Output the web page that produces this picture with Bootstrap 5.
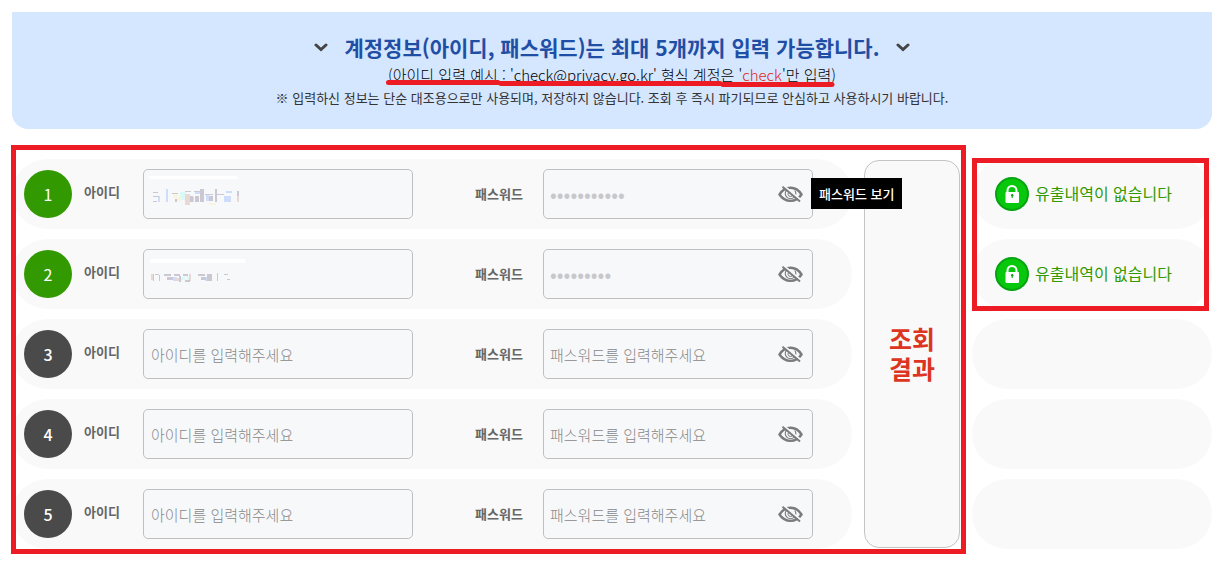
<!DOCTYPE html>
<html lang="ko">
<head>
<meta charset="utf-8">
<meta name="viewport" content="width=device-width, initial-scale=1">
<title>계정정보 유출 조회</title>
<link href="https://cdn.jsdelivr.net/npm/bootstrap@5.3.0/dist/css/bootstrap.min.css" rel="stylesheet">
<style>
body{font-family:"Noto Sans CJK KR",sans-serif;color:#333;background:#fff;padding:12px 9px 12px 12px}
.guide{background:#d5e6ff;border-radius:0 0 16px 16px;padding:19px 12px 21px}
.guide h1{font-size:21px;line-height:32px;font-weight:700;color:#1f4fa5;margin:0}
.guide p{margin:0}
.example{font-size:15px;line-height:24px;font-weight:300;color:#000}
.example em{font-style:normal;color:#e01f10}
.notice{font-size:13px;line-height:21px}
.marker{position:absolute;left:50%;top:17px;transform:translateX(-50%)}
.board{margin-top:30px;gap:12px}
.board-form{gap:12px}
.entry{background:#f9f9f9;border-radius:35px;height:70px;padding:0 39px 0 12px}
.num{width:48px;height:48px;border-radius:50%;background:#4a4a4a;color:#fff;font-size:16px;font-weight:500}
.num.on{background:#339900;font-weight:400}
.lbl{font-size:13px;font-weight:700;color:#666;line-height:20px}
.lbl-id{width:71px;padding:0 0 4px 12px}
.lbl-pw{width:130px;padding-left:62px}
.field{flex:1 1 0;min-width:0}
.field .form-control{height:50px;border:1px solid #c0c0c0;border-radius:5px;background:#f7f8fa;padding:0 7px;font-size:15px;font-weight:300;color:#c8c8cc}
.field .form-control::placeholder{color:#888;opacity:1}
.field .pw{padding:0 40px 0 6px}
.field .filled{font-size:20px;font-weight:400;padding-bottom:2px}
.mosaic{position:absolute;left:0;top:0;pointer-events:none}
.eye{position:absolute;right:10px;top:14px;width:25px;height:22px}
.tip{position:absolute;left:100%;top:9px;margin-left:-2px;background:#000;color:#fff;font-size:13px;font-weight:500;line-height:31px;padding:0 8px;z-index:3;white-space:nowrap}
.result{width:96px;border:1px solid #c4c4c4;border-radius:15px;background:#f9f9f9;color:#dc3522;font-size:25px;line-height:30px;font-weight:700;margin:1px 0;padding:0 20px 2px;word-break:keep-all}
.side{width:240px}
.status{background:#f9f9f9;border-radius:35px;height:70px;padding-left:23px;gap:6px;font-size:16px;color:#339900}
.status span{padding-bottom:2px}
.stack{gap:10px}
.frame{position:absolute;border:5px solid #ed1c24;pointer-events:none;z-index:2}
.frame-form{inset:-14px -6px -5px -1px}
.frame-status{inset:-1px 3px -2px 0}
</style>
</head>
<body>
<svg width="0" height="0" class="position-absolute" aria-hidden="true">
  <symbol id="eye" viewBox="0 0 25 22">
    <g fill="none" stroke="#7b7b7b">
      <path d="M1.500 11.500C7 2.500 18 2.500 23.500 11.500C18 20 7 20 1.500 11.500Z" stroke-width="2.400"/>
      <path d="M8.300 7.500a5.200 5.200 0 1 0 8.500 0" stroke-width="1.300"/>
      <path d="M10.500 9.500a2.500 2.500 0 1 0 4 0" stroke-width="1"/>
      <path d="M6 3L23 17" stroke="#f7f8fa" stroke-width="2"/>
      <path d="M4.500 3.800L22 18.500" stroke-width="2"/>
    </g>
  </symbol>
  <symbol id="lock" viewBox="0 0 34 34">
    <circle cx="17" cy="17" r="16" fill="#07c80d" stroke="#07a310" stroke-width="2"/>
    <path d="M12.500 16v-2.500a4.500 4.500 0 0 1 9 0V16" fill="none" stroke="#fff" stroke-width="2"/>
    <rect x="10.500" y="15" width="13.500" height="11" rx="1" fill="#fff"/>
    <circle cx="17.200" cy="18.200" r="1.200" fill="#07a310"/><path d="M17.200 18v3" stroke="#07a310"/>
  </symbol>
  <symbol id="chev" viewBox="0 0 14 10"><path d="M2 3l5 4.500 5-4.500" fill="none" stroke="#444" stroke-width="3" stroke-linecap="round"/></symbol>
</svg>

<header class="guide text-center">
  <div class="d-flex justify-content-center align-items-center gap-3">
    <svg width="14" height="10"><use href="#chev"/></svg>
    <h1>계정정보(아이디, 패스워드)는 최대 5개까지 입력 가능합니다.</h1>
    <svg width="14" height="10"><use href="#chev"/></svg>
  </div>
  <p class="example position-relative">(아이디 입력 예시 : 'check@privacy.go.kr' 형식 계정은 '<em>check</em>'만 입력)
    <svg class="marker" width="454" height="8" viewBox="0 0 454 8" aria-hidden="true"><path d="M3.500 2.500H113M116 3.500H335M338 4.500H447" stroke="#ed1c24" stroke-width="5" stroke-linecap="round"/></svg>
  </p>
  <p class="notice">※ 입력하신 정보는 단순 대조용으로만 사용되며, 저장하지 않습니다. 조회 후 즉시 파기되므로 안심하고 사용하시기 바랍니다.</p>
</header>

<main class="board d-flex">
  <form class="board-form d-flex flex-grow-1 position-relative">
    <div class="d-flex flex-column flex-grow-1 stack">
      <div class="entry d-flex align-items-center">
        <span class="num on d-flex align-items-center justify-content-center">1</span>
        <label class="lbl lbl-id" for="id1">아이디</label>
        <div class="field position-relative">
          <input class="form-control" id="id1" type="text">
          <svg class="mosaic" width="110" height="50" shape-rendering="crispEdges" aria-hidden="true">
            <path fill="#fff" d="M6 7h88v3H6z"/>
            <path fill="#d9f8f6" d="M37 23h6v8h-6z"/>
            <path fill="#f7f4df" d="M34 28h4v4h-4zM30 25h4v4h-4zM66 34h7v2h-7z"/>
            <path fill="#e8d9d7" d="M42 25h5v11h-5zM48 28h3v5h-3zM94 27h2v6h-2z"/>
            <path fill="#cdddfb" d="M15 27h2v6h-2zM23 20h2v13h-2zM63 26h3v6h-3zM81 27h7v6h-7zM83 22h6v2h-6zM52 22h5v3h-5z"/>
            <path fill="#cbc7d3" d="M10 23h5v1h-5zM10 27h6v1h-6zM10 32h4v1h-4zM29 24h6v1h-6zM32 30h2v3h-2zM42 22h6v1h-6zM47 27h3v6h-3zM51 22h6v1h-6zM57 20h4v13h-4zM52 27h4v6h-4zM66 27h4v5h-4zM62 25h8v1h-8zM72 20h2v13h-2zM74 25h7v1h-7zM94 22h2v5h-2z"/>
          </svg>
        </div>
        <label class="lbl lbl-pw" for="pw1">패스워드</label>
        <div class="field position-relative">
          <input class="form-control pw filled" id="pw1" type="password" value="00000000000">
          <button class="btn p-0 border-0 eye d-flex" type="button" aria-label="패스워드 보기"><svg width="25" height="22"><use href="#eye"/></svg></button>
          <span class="tip">패스워드 보기</span>
        </div>
      </div>
      <div class="entry d-flex align-items-center">
        <span class="num on d-flex align-items-center justify-content-center">2</span>
        <label class="lbl lbl-id" for="id2">아이디</label>
        <div class="field position-relative">
          <input class="form-control" id="id2" type="text">
          <svg class="mosaic" width="110" height="50" shape-rendering="crispEdges" aria-hidden="true">
            <path fill="#fff" d="M7 10h95v4H7z"/>
            <path fill="#cdddfb" d="M30 28h4v4h-4zM62 28h4v4h-4z"/>
            <path fill="#d9f8f6" d="M38 28h4v3h-4zM44 27h2v4h-2z"/>
            <path fill="#e8d9d7" d="M8 25h2v6h-2zM33 29h3v3h-3zM46 25h2v7h-2z"/>
            <path fill="#cbc7d3" d="M10 25h1v7h-1zM12 25h4v1h-4zM16 26h1v6h-1zM21 25h7v2h-7zM24 28h6v3h-6zM31 25h6v2h-6zM36 27h2v6h-2zM40 25h5v2h-5zM42 31h5v2h-5zM55 25h7v2h-7zM58 28h5v3h-5zM64 25h5v7h-5zM74 24h1v8h-1zM81 25h4v1h-4zM84 30h3v1h-3z"/>
          </svg>
        </div>
        <label class="lbl lbl-pw" for="pw2">패스워드</label>
        <div class="field position-relative">
          <input class="form-control pw filled" id="pw2" type="password" value="000000000">
          <button class="btn p-0 border-0 eye d-flex" type="button" aria-label="패스워드 보기"><svg width="25" height="22"><use href="#eye"/></svg></button>
        </div>
      </div>
      <div class="entry d-flex align-items-center">
        <span class="num d-flex align-items-center justify-content-center">3</span>
        <label class="lbl lbl-id" for="id3">아이디</label>
        <div class="field"><input class="form-control" id="id3" type="text" placeholder="아이디를 입력해주세요"></div>
        <label class="lbl lbl-pw" for="pw3">패스워드</label>
        <div class="field position-relative">
          <input class="form-control pw" id="pw3" type="password" placeholder="패스워드를 입력해주세요">
          <button class="btn p-0 border-0 eye d-flex" type="button" aria-label="패스워드 보기"><svg width="25" height="22"><use href="#eye"/></svg></button>
        </div>
      </div>
      <div class="entry d-flex align-items-center">
        <span class="num d-flex align-items-center justify-content-center">4</span>
        <label class="lbl lbl-id" for="id4">아이디</label>
        <div class="field"><input class="form-control" id="id4" type="text" placeholder="아이디를 입력해주세요"></div>
        <label class="lbl lbl-pw" for="pw4">패스워드</label>
        <div class="field position-relative">
          <input class="form-control pw" id="pw4" type="password" placeholder="패스워드를 입력해주세요">
          <button class="btn p-0 border-0 eye d-flex" type="button" aria-label="패스워드 보기"><svg width="25" height="22"><use href="#eye"/></svg></button>
        </div>
      </div>
      <div class="entry d-flex align-items-center">
        <span class="num d-flex align-items-center justify-content-center">5</span>
        <label class="lbl lbl-id" for="id5">아이디</label>
        <div class="field"><input class="form-control" id="id5" type="text" placeholder="아이디를 입력해주세요"></div>
        <label class="lbl lbl-pw" for="pw5">패스워드</label>
        <div class="field position-relative">
          <input class="form-control pw" id="pw5" type="password" placeholder="패스워드를 입력해주세요">
          <button class="btn p-0 border-0 eye d-flex" type="button" aria-label="패스워드 보기"><svg width="25" height="22"><use href="#eye"/></svg></button>
        </div>
      </div>
    </div>
    <button class="result flex-shrink-0" type="button">조회 결과</button>
    <div class="frame frame-form"></div>
  </form>
  <section class="side d-flex flex-column flex-shrink-0 stack">
    <div class="d-flex flex-column stack position-relative">
      <div class="status d-flex align-items-center"><svg width="34" height="34"><use href="#lock"/></svg><span>유출내역이 없습니다</span></div>
      <div class="status d-flex align-items-center"><svg width="34" height="34"><use href="#lock"/></svg><span>유출내역이 없습니다</span></div>
      <div class="frame frame-status"></div>
    </div>
    <div class="status"></div>
    <div class="status"></div>
    <div class="status"></div>
  </section>
</main>
<script src="https://cdn.jsdelivr.net/npm/bootstrap@5.3.0/dist/js/bootstrap.bundle.min.js"></script>
</body>
</html>
